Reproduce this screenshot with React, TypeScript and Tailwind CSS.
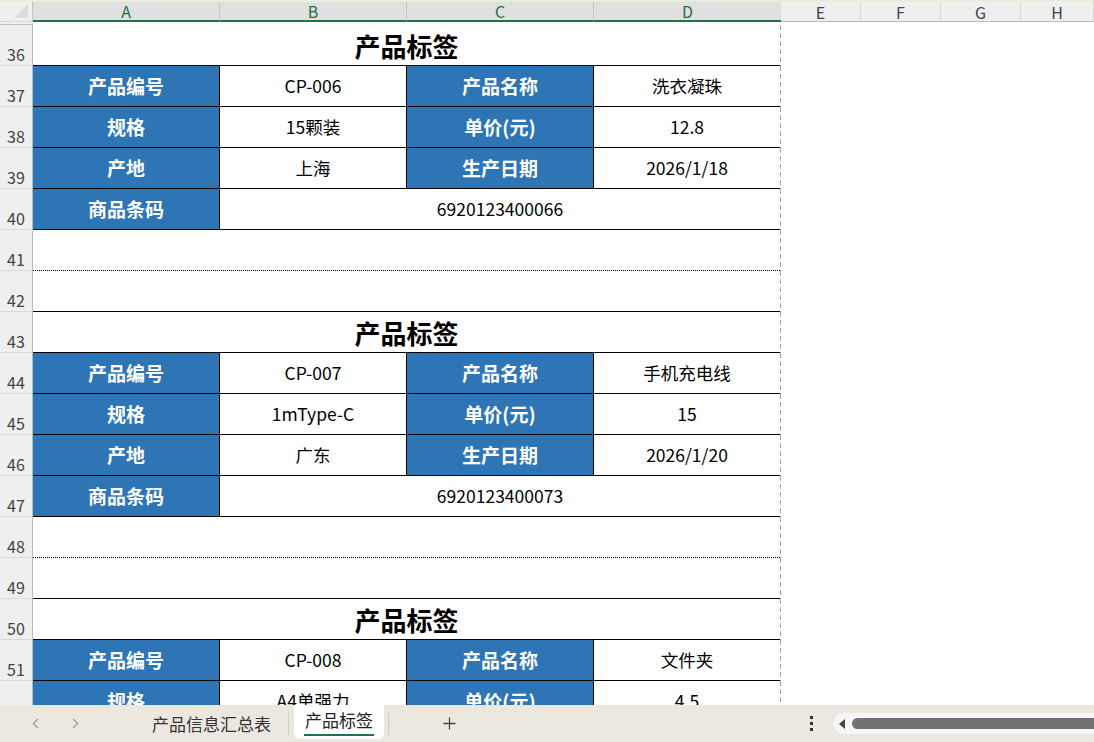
import React from 'react';
import { ChevronLeft, ChevronRight, Plus } from 'lucide-react';

type Label = {
  id: string;
  name: string;
  spec: string;
  price: string;
  origin: string;
  date: string;
  code: string;
};

const labels: Label[] = [
  { id: 'CP-006', name: '洗衣凝珠', spec: '15颗装', price: '12.8', origin: '上海', date: '2026/1/18', code: '6920123400066' },
  { id: 'CP-007', name: '手机充电线', spec: '1mType-C', price: '15', origin: '广东', date: '2026/1/20', code: '6920123400073' },
  { id: 'CP-008', name: '文件夹', spec: 'A4单强力', price: '4.5', origin: '浙江', date: '2026/1/22', code: '6920123400080' },
];

const rowGrid = 'grid h-[41px] shrink-0 grid-cols-[33px_187px_187px_187px_186px_1fr]';
const lab = 'flex items-center justify-center bg-[#2e75b6] text-white font-bold text-[19px] border-r border-b border-black';
const val = 'flex items-center justify-center bg-white text-black text-[17.5px] border-r border-b border-black';
const valD = 'flex items-center justify-center bg-white text-black text-[17.5px] border-b border-black';

const RowHead = ({ n }: { n: number }) => (
  <div className="flex items-end justify-center bg-[#efefef] border-r border-r-[#b9b9b9] border-b border-b-[#dadada] text-[16px] text-[#444] leading-none pb-[3px]">
    {n}
  </div>
);

// page-break line on the right edge of the print area
const Edge = () => (
  <div className="bg-white bg-[linear-gradient(to_bottom,#a3a3a3_5px,transparent_5px)] bg-[length:1px_8px] bg-repeat-y" />
);

const Row = ({ n, children }: { n: number; children: React.ReactNode }) => (
  <div className={rowGrid}>
    <RowHead n={n} />
    {children}
    <Edge />
  </div>
);

const LabelBlock = ({ item, start }: { item: Label; start: number }) => (
  <>
    <Row n={start}>
      <div className="col-span-4 flex items-center justify-center border-b border-black text-[26px] font-bold text-black">产品标签</div>
    </Row>
    <Row n={start + 1}>
      <div className={lab}>产品编号</div>
      <div className={val}>{item.id}</div>
      <div className={lab}>产品名称</div>
      <div className={valD}>{item.name}</div>
    </Row>
    <Row n={start + 2}>
      <div className={lab}>规格</div>
      <div className={val}>{item.spec}</div>
      <div className={lab}>单价(元)</div>
      <div className={valD}>{item.price}</div>
    </Row>
    <Row n={start + 3}>
      <div className={lab}>产地</div>
      <div className={val}>{item.origin}</div>
      <div className={lab}>生产日期</div>
      <div className={valD}>{item.date}</div>
    </Row>
    <Row n={start + 4}>
      <div className={lab}>商品条码</div>
      <div className={`${valD} col-span-3`}>{item.code}</div>
    </Row>
    <Row n={start + 5}>
      <div className="col-span-4 border-b border-dotted border-black" />
    </Row>
    <Row n={start + 6}>
      <div className="col-span-4 border-b border-black" />
    </Row>
  </>
);

export default function App() {
  return (
    <div
      className="flex h-screen w-full flex-col overflow-hidden bg-white"
      style={{ fontFamily: '"Noto Sans CJK SC", "Noto Sans", sans-serif' }}
    >
      {/* column headers */}
      <div className="h-[2px] bg-[#e6eedd]" />
      <div className="grid h-[23px] shrink-0 grid-cols-[33px_187px_187px_187px_187px_80px_80px_80px_1fr] text-[16px] leading-none">
        <div className="flex items-end justify-end bg-[#efefef] border-r border-r-[#c4c4c4] border-b border-b-[#d6d6d6] pb-[3px] pr-[4px]">
          <span className="h-0 w-0 border-l-[14px] border-b-[14px] border-l-transparent border-b-[#dcdcdc]" />
        </div>
        {['A', 'B', 'C', 'D'].map((c, i) => (
          <div
            key={c}
            className={`flex items-center justify-center bg-[#e0e0e0] text-[#1e7145] border-b-2 border-b-[#217346] ${i < 3 ? 'border-r border-r-[#c6c6c6]' : ''}`}
          >
            {c}
          </div>
        ))}
        {['E', 'F', 'G', 'H'].map((c) => (
          <div key={c} className="flex items-center justify-center bg-[#efefef] text-[#444] border-r border-r-[#d6d6d6] border-b border-b-[#bdbdbd]">
            {c}
          </div>
        ))}
        <div className="bg-[#efefef] border-b border-b-[#bdbdbd]" />
      </div>

      {/* sheet body */}
      <div className="flex flex-1 flex-col overflow-hidden">
        {labels.map((l, i) => (
          <LabelBlock key={l.id} item={l} start={36 + i * 7} />
        ))}
      </div>

      {/* sheet tabs */}
      <div className="flex h-[37px] shrink-0 items-center bg-[#ece8e0] text-[17px]">
        <div className="ml-[25px] flex w-[20px] justify-center text-[#9b9b9b]">
          <ChevronLeft size={17} strokeWidth={1.5} />
        </div>
        <div className="ml-[20px] flex w-[20px] justify-center text-[#9b9b9b]">
          <ChevronRight size={17} strokeWidth={1.5} />
        </div>
        <div className="ml-[50px] flex w-[153px] justify-center text-[#333]">产品信息汇总表</div>
        <div className="h-[22px] w-px bg-[#d2cdc4]" />
        <div className="ml-[5px] flex h-[34px] w-[90px] flex-col items-center justify-center self-start rounded-b-[6px] bg-white text-[#222]">
          <span className="leading-[22px]">产品标签</span>
          <span className="mt-[3px] h-[2px] w-[70px] bg-[#217346]" />
        </div>
        <div className="ml-[4px] h-[22px] w-px bg-[#d2cdc4]" />
        <div className="flex w-[120px] justify-center text-[#444]">
          <Plus size={19} strokeWidth={1.6} />
        </div>
        <div className="ml-[282px] flex w-[40px] flex-col items-center gap-[3px]">
          <span className="h-[3px] w-[3px] bg-[#333]" />
          <span className="h-[3px] w-[3px] bg-[#333]" />
          <span className="h-[3px] w-[3px] bg-[#333]" />
        </div>
        <div className="ml-[2px] flex h-[21px] flex-1 items-center rounded-l-full bg-[#f6f6f6] pl-[6px]">
          <span className="h-0 w-0 border-y-[5px] border-r-[6px] border-y-transparent border-r-[#444]" />
          <span className="ml-[7px] h-[11px] flex-1 rounded-l-full bg-[#727272]" />
        </div>
      </div>
    </div>
  );
}
